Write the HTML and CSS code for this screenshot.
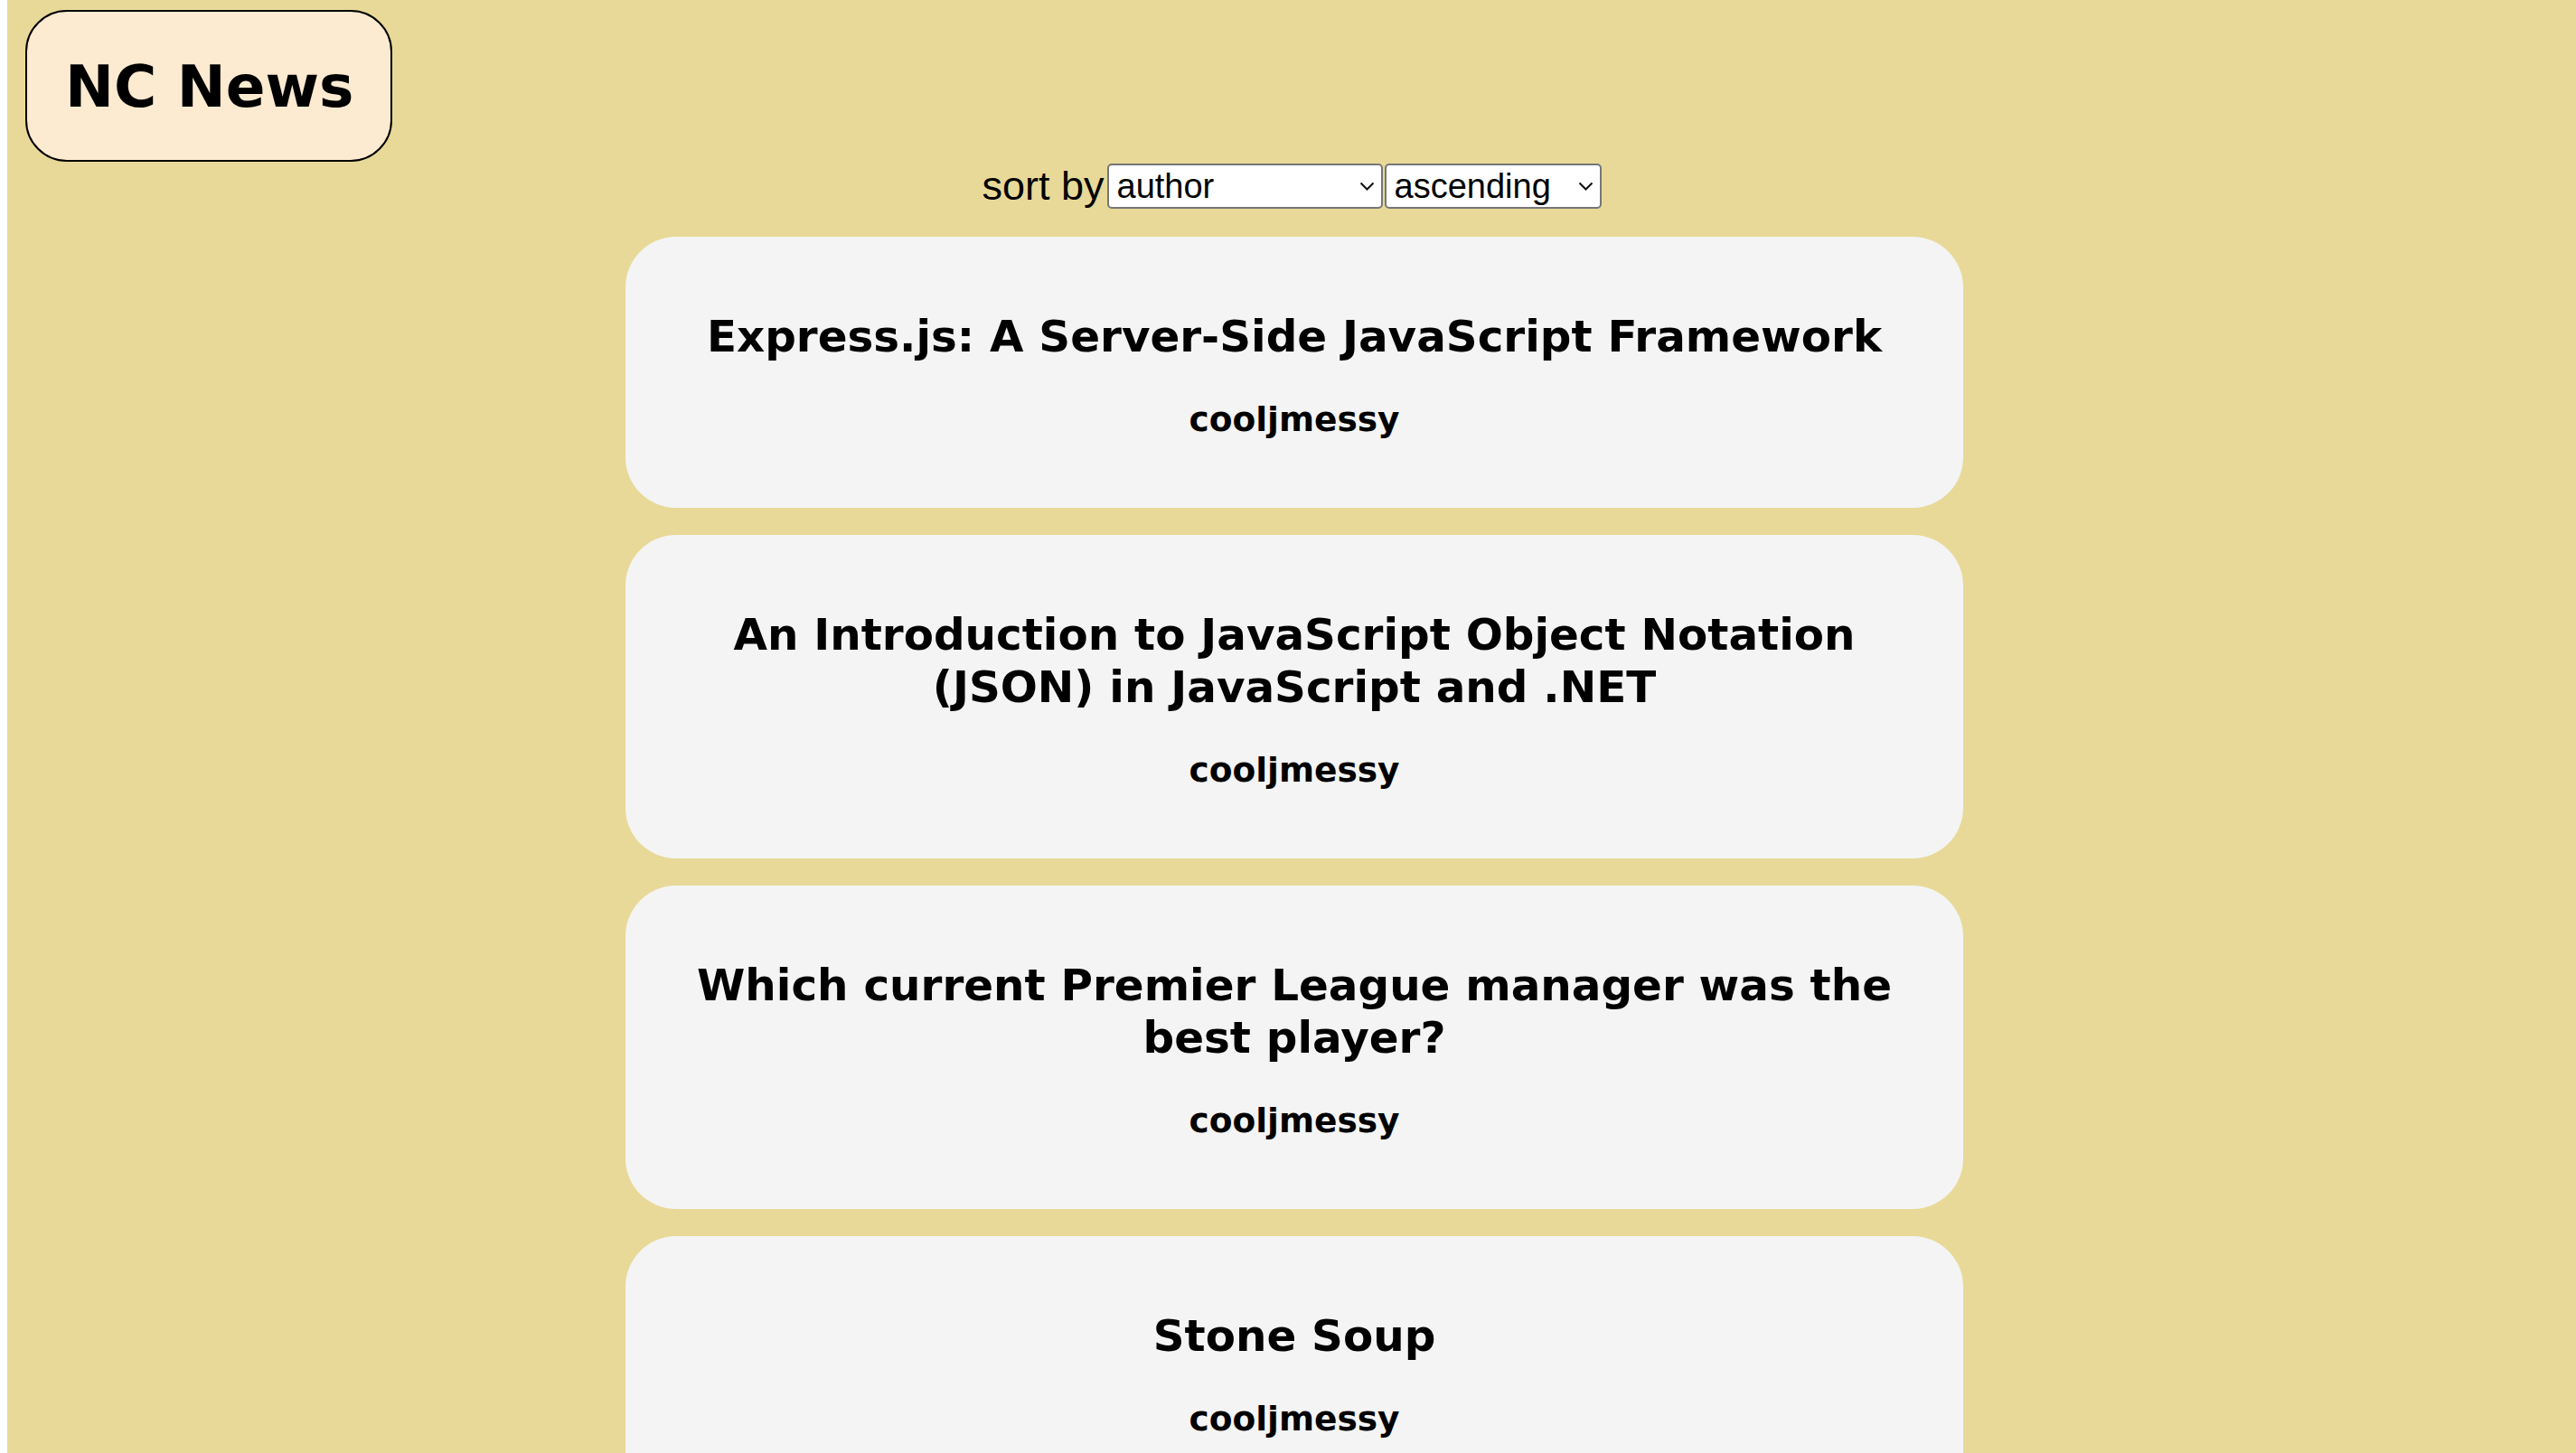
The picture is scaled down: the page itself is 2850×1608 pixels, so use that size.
FILE: index.html
```html
<!DOCTYPE html>
<html lang="en">
<head>
<meta charset="utf-8">
<title>NC News</title>
<link rel="stylesheet" href="styles.css">
</head>
<body>
<div class="app">
  <header class="header">
    <h1 class="logo">NC News</h1>
  </header>
  <div class="sort-row">
    <span class="sort-label">sort by</span>
    <span class="select-wrap select-wrap--field">
      <select class="select">
        <option>author</option>
        <option>title</option>
        <option>created_at</option>
        <option>votes</option>
        <option>comment_count</option>
      </select>
      <svg class="chevron" viewBox="0 0 16 10" width="17" height="10"><path d="M1 1.5 L8 8.5 L15 1.5" fill="none" stroke="#111" stroke-width="2"/></svg>
    </span>
    <span class="select-wrap select-wrap--order">
      <select class="select">
        <option>ascending</option>
        <option>descending</option>
      </select>
      <svg class="chevron" viewBox="0 0 16 10" width="17" height="10"><path d="M1 1.5 L8 8.5 L15 1.5" fill="none" stroke="#111" stroke-width="2"/></svg>
    </span>
  </div>
  <main class="list">
    <article class="card">
      <h2 class="card-title">Express.js: A Server-Side JavaScript Framework</h2>
      <h3 class="card-author">cooljmessy</h3>
    </article>
    <article class="card">
      <h2 class="card-title">An Introduction to JavaScript Object Notation (JSON) in JavaScript and .NET</h2>
      <h3 class="card-author">cooljmessy</h3>
    </article>
    <article class="card">
      <h2 class="card-title">Which current Premier League manager was the best player?</h2>
      <h3 class="card-author">cooljmessy</h3>
    </article>
    <article class="card">
      <h2 class="card-title">Stone Soup</h2>
      <h3 class="card-author">cooljmessy</h3>
    </article>
  </main>
</div>
</body>
</html>
```

FILE: styles.css
```css
html {
  background: #ffffff;
}

body {
  margin: 0;
  font-family: "DejaVu Sans", Verdana, sans-serif;
  color: #000;
}

.app {
  margin-left: 8px;
  min-height: 1608px;
  background: #e8d998;
  padding-top: 11px;
  overflow: hidden;
}

.header {
  display: flex;
  padding-left: 20px;
}

.logo {
  margin: 0;
  font-size: 64.5px;
  line-height: 75px;
  font-weight: bold;
  padding: 45px 41px 44px 42px;
  background: #fcebd0;
  border: 2px solid #000;
  border-radius: 46px;
}

.sort-row {
  margin-top: 2px;
  height: 50px;
  display: flex;
  justify-content: center;
  align-items: center;
  font-family: "Liberation Sans", Arial, sans-serif;
}

.sort-label {
  font-size: 45px;
  line-height: 50px;
  margin-right: 1px;
}

.select-wrap {
  position: relative;
  display: inline-flex;
  margin-left: 2px;
}

.select {
  -webkit-appearance: none;
  appearance: none;
  height: 50px;
  box-sizing: border-box;
  border: 2px solid #767676;
  border-radius: 5px;
  background: #fff;
  color: #000;
  font-family: "Liberation Sans", Arial, sans-serif;
  font-size: 38px;
  padding: 0 0 0 9px;
  margin: 0;
}

.select-wrap--field .select {
  width: 305px;
}

.select-wrap--order .select {
  width: 240px;
}

.chevron {
  position: absolute;
  right: 9px;
  top: 20px;
  pointer-events: none;
}

.list {
  display: flex;
  flex-direction: column;
  align-items: center;
  gap: 30px;
  margin-top: 31px;
  padding-left: 6px;
}

.card {
  width: 1480px;
  box-sizing: border-box;
  padding: 41px 40px;
  background: #f4f4f4;
  border-radius: 56px;
  text-align: center;
}

.card-title {
  margin: 40px 0;
  font-size: 48.4px;
  line-height: 58px;
  font-weight: bold;
}

.card-author {
  margin: 42px 0 35px;
  font-size: 37.5px;
  line-height: 43px;
  font-weight: bold;
}
```
